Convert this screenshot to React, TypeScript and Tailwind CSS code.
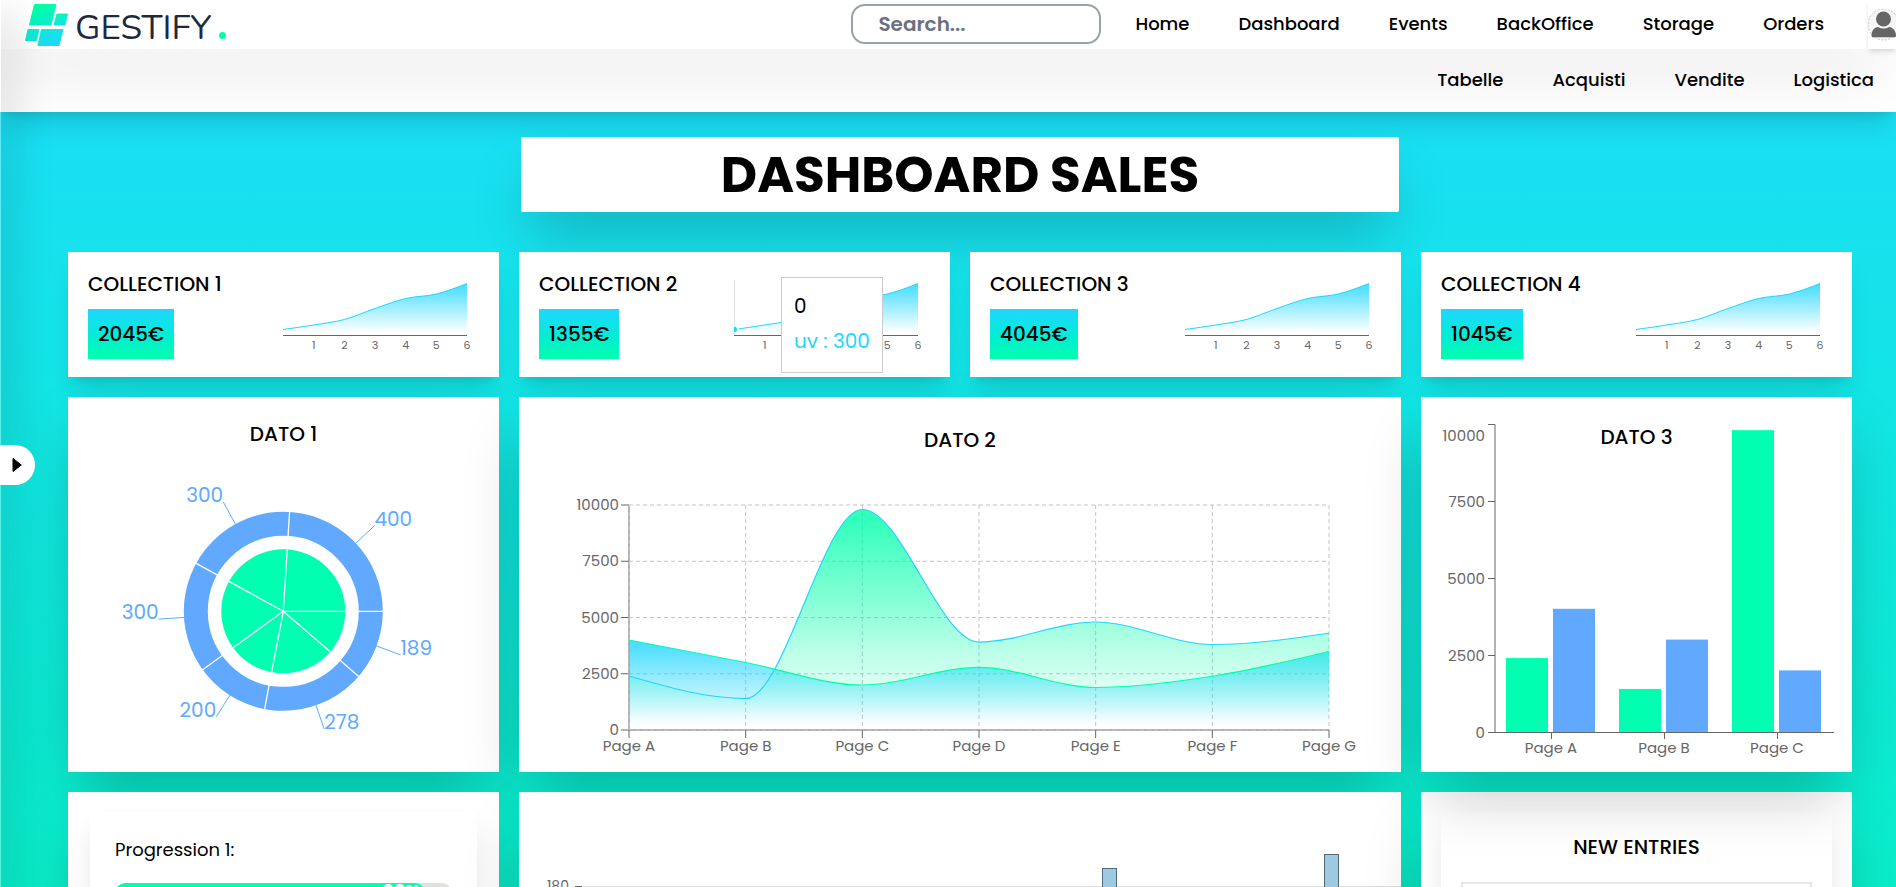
import React from "react";

type Point = [number, number];

const ACCENT_BLUE = "#1fd6ff";
const ACCENT_GREEN = "#00ffb0";
const SOFT_BLUE = "#60a9ff";
const AXIS = "#666666";

/* Monotone cubic interpolation through the points, as an SVG path. */
function monotonePath(points: Point[]): string {
  const n = points.length;
  const slopes = points.slice(1).map(([x, y], i) => (y - points[i][1]) / (x - points[i][0]));
  const tangents: number[] = new Array(n).fill(0);
  for (let i = 1; i < n - 1; i++) {
    const a = slopes[i - 1];
    const b = slopes[i];
    const p = (a + b) / 2;
    tangents[i] =
      a * b <= 0 ? 0 : Math.sign(a) * 2 * Math.min(Math.abs(a), Math.abs(b), 0.5 * Math.abs(p));
  }
  tangents[0] = (3 * slopes[0] - tangents[1]) / 2;
  tangents[n - 1] = (3 * slopes[n - 2] - tangents[n - 2]) / 2;
  let d = `M${points[0][0]},${points[0][1]}`;
  for (let i = 0; i < n - 1; i++) {
    const [x0, y0] = points[i];
    const [x1, y1] = points[i + 1];
    const h = (x1 - x0) / 3;
    d += `C${x0 + h},${y0 + h * tangents[i]},${x1 - h},${y1 - h * tangents[i + 1]},${x1},${y1}`;
  }
  return d;
}

function closeArea(path: string, points: Point[], base: number): string {
  return `${path}L${points[points.length - 1][0]},${base}L${points[0][0]},${base}Z`;
}

function FadeGradient({ id, color }: { id: string; color: string }) {
  return (
    <linearGradient id={id} x1="0" y1="0" x2="0" y2="1">
      <stop offset="5%" stopColor={color} stopOpacity={0.8} />
      <stop offset="95%" stopColor={color} stopOpacity={0} />
    </linearGradient>
  );
}

function Logo() {
  return (
    <a href="#" aria-label="Gestify" className="flex items-center gap-[7px] pl-6">
      <svg viewBox="0 0 44 42" className="h-[42px] w-11" aria-hidden="true">
        <defs>
          <linearGradient id="logo" x1="12" y1="0" x2="30" y2="42" gradientUnits="userSpaceOnUse">
            <stop offset="0.1" stopColor="#00ffa8" />
            <stop offset="1" stopColor="#1fd6ff" />
          </linearGradient>
        </defs>
        <g fill="url(#logo)" stroke="url(#logo)" strokeWidth="1" strokeLinejoin="round">
          <path d="M10.500 0.500H32L27 21H5.500Z" />
          <path d="M33 10H43.500L41 21H30Z" />
          <path d="M4 25.500H15L12.500 36.500H1.500Z" />
          <path d="M17.500 25.500H39L35 41.500H14Z" />
        </g>
      </svg>
      <span className="mt-[5px] flex items-baseline gap-2">
        <span className="font-['Nunito','Lato',sans-serif] text-[35px] leading-none text-slate-800">GESTIFY</span>
        <span className="size-[7px] rounded-full bg-[#00ffa8]" />
      </span>
    </a>
  );
}

const MAIN_LINKS = ["Home", "Dashboard", "Events", "BackOffice", "Storage", "Orders"];
const SUB_LINKS = ["Tabelle", "Acquisti", "Vendite", "Logistica"];

function Header() {
  return (
    <header className="relative z-10">
      <div className="relative flex h-[49px] items-center justify-between bg-white shadow-[0_35px_60px_-10px_rgba(0,0,0,0.11)]">
        <Logo />
        <div className="flex h-full items-center">
          <div className="flex items-center pb-0.5">
            <input
              type="search"
              aria-label="Search"
              placeholder="Search..."
              className="h-10 w-[250px] rounded-[14px] border-2 border-gray-400 bg-white px-[25px] text-[20px] font-semibold placeholder:text-gray-500"
            />
            <nav className="ml-[34px] flex gap-[49px]">
              {MAIN_LINKS.map((label) => (
                <a key={label} href="#" className="text-[18px] font-medium">
                  {label}
                </a>
              ))}
            </nav>
          </div>
          <button
            type="button"
            aria-label="Account"
            className="ml-11 flex h-full w-7 items-center overflow-hidden shadow-md"
          >
            <svg viewBox="0 0 32 32" className="size-8 shrink-0" aria-hidden="true">
              <circle cx="15.500" cy="15.500" r="15.500" fill="#f5f5f5" stroke="#c4c4c4" strokeDasharray="2 1.500" />
              <circle cx="15.500" cy="10" r="7.500" fill="#666666" />
              <path d="M3.500 26.500c0-5 3-8 6.500-8.500 3.500 2 7.500 2 11 0C24.500 18.500 28 21.500 28 26.500c0 1-.5 1.800-1.500 1.800H5C4 28.300 3.500 27.500 3.500 26.500Z" fill="#666666" />
            </svg>
          </button>
        </div>
      </div>
      <nav className="flex h-[63px] items-center justify-end gap-[49px] bg-white pr-[22px] pb-0.5 shadow-xl">
        {SUB_LINKS.map((label) => (
          <a key={label} href="#" className="relative text-[18px] font-medium">
            {label}
          </a>
        ))}
      </nav>
    </header>
  );
}

const SPARK_POINTS: Point[] = [
  [10, 57.5],
  [40.67, 53],
  [71.33, 47.5],
  [102, 36.5],
  [132.67, 26.5],
  [163.33, 22],
  [194, 11.5],
];

function Sparkline({ id, active }: { id: string; active?: boolean }) {
  const line = monotonePath(SPARK_POINTS);
  return (
    <svg viewBox="0 0 206 85" className="h-[85px] w-[206px] shrink-0" role="img" aria-label="Trend">
      <defs>
        <FadeGradient id={id} color={ACCENT_BLUE} />
        <clipPath id={`${id}-clip`}>
          <rect x="10" y="5" width="190" height="60" />
        </clipPath>
      </defs>
      <path d={closeArea(line, SPARK_POINTS, 63)} fill={`url(#${id})`} />
      <path d={line} fill="none" stroke={ACCENT_BLUE} />
      <path d="M10 63.500H194" stroke={AXIS} />
      {active && (
        <g clipPath={`url(#${id}-clip)`}>
          <path d="M10.500 9V63" stroke="#dddddd" />
          <circle cx="10" cy="57.500" r="4" fill={ACCENT_BLUE} stroke="#ffffff" strokeWidth="2" />
        </g>
      )}
      {SPARK_POINTS.slice(1).map(([x], i) => (
        <text key={x} x={x} y="77" textAnchor="middle" fontSize="11" fill={AXIS}>
          {i + 1}
        </text>
      ))}
    </svg>
  );
}

const COLLECTIONS = [
  { name: "COLLECTION 1", amount: "2045€" },
  { name: "COLLECTION 2", amount: "1355€" },
  { name: "COLLECTION 3", amount: "4045€" },
  { name: "COLLECTION 4", amount: "1045€" },
];

function CollectionCard({ name, amount, index }: { name: string; amount: string; index: number }) {
  const active = index === 1;
  return (
    <section className="flex h-[125px] justify-between bg-white px-5 pt-5 shadow-xl">
      <div className="flex flex-col items-start gap-[13px]">
        <h2 className="text-[20px] leading-6 font-medium">{name}</h2>
        <p className="bg-linear-to-b from-[#1fd6ff] to-[#00ffab] p-2.5 text-[20px] leading-[30px] font-medium">
          {amount}
        </p>
      </div>
      <div className="relative">
        <Sparkline id={`spark-${index}`} active={active} />
        {active && (
          <div className="absolute top-[5px] left-[57px] flex flex-col gap-1 border border-[#cccccc] bg-white px-3 pt-[13px] pb-[15px] text-[20px] leading-[31px] whitespace-nowrap">
            <p>0</p>
            <p className="text-[#1fd6ff]">uv : 300</p>
          </div>
        )}
      </div>
    </section>
  );
}

const SLICES = [400, 300, 300, 200, 278, 189];

function PieChart() {
  const cx = 215.3;
  const cy = 165.3;
  const total = SLICES.reduce((a, b) => a + b, 0);
  const at = (angle: number, r: number): Point => [cx + r * Math.cos(angle), cy - r * Math.sin(angle)];
  let start = 0;
  const parts = SLICES.map((value) => {
    const sweep = (value / total) * Math.PI * 2;
    const part = { value, start, mid: start + sweep / 2 };
    start += sweep;
    return part;
  });
  return (
    <svg viewBox="0 0 431 326" className="w-full" role="img" aria-label="Dato 1">
      <circle cx={cx} cy={cy} r="62" fill={ACCENT_GREEN} />
      <circle cx={cx} cy={cy} r="87.500" fill="none" stroke={SOFT_BLUE} strokeWidth="24" />
      {parts.map(({ value, start: a, mid }, i) => {
        const [x1, y1] = at(a, 62);
        const [x2, y2] = at(a, 75);
        const [x3, y3] = at(a, 100);
        const [lx, ly] = at(mid, 99);
        const [tx, ty] = at(mid, 125);
        return (
          <g key={i}>
            <path
              d={`M${cx},${cy}L${x1},${y1}M${x2},${y2}L${x3},${y3}`}
              stroke="#ffffff"
              strokeWidth="1.300"
            />
            <path d={`M${lx},${ly}L${tx},${ty}`} stroke={SOFT_BLUE} />
            <text x={tx} y={ty} textAnchor={tx > cx ? "start" : "end"} fontSize="20" fill={SOFT_BLUE}>
              {value}
            </text>
          </g>
        );
      })}
    </svg>
  );
}

const UV = [4000, 3000, 2000, 2780, 1890, 2390, 3490];
const PV = [2400, 1398, 9800, 3908, 4800, 3800, 4300];
const PAGES = ["Page A", "Page B", "Page C", "Page D", "Page E", "Page F", "Page G"];
const TICKS = [0, 2500, 5000, 7500, 10000];

function AreaChart() {
  const x = (i: number) => 110 + (i * 700) / 6;
  const y = (v: number) => 278 - v * 0.0225;
  const uv = UV.map((v, i): Point => [x(i), y(v)]);
  const pv = PV.map((v, i): Point => [x(i), y(v)]);
  const uvLine = monotonePath(uv);
  const pvLine = monotonePath(pv);
  return (
    <svg viewBox="0 0 882 320" className="w-full" role="img" aria-label="Dato 2">
      <defs>
        <FadeGradient id="area-uv" color={ACCENT_BLUE} />
        <FadeGradient id="area-pv" color="#00ffab" />
      </defs>
      <path d="M110 53V278M110 278H810" stroke={AXIS} />
      {TICKS.map((t) => (
        <g key={t}>
          <path d={`M102,${y(t)}H110`} stroke={AXIS} />
          <path d={`M110,${y(t)}H810`} stroke="#c4c4c4" strokeDasharray="4 3" />
          <text x="100" y={y(t) + 5} textAnchor="end" fontSize="15" fill={AXIS}>
            {t}
          </text>
        </g>
      ))}
      {PAGES.map((page, i) => (
        <g key={page}>
          <path d={`M${x(i)},278V286`} stroke={AXIS} />
          <path d={`M${x(i)},53V278`} stroke="#c4c4c4" strokeDasharray="4 3" />
          <text x={x(i)} y="299" textAnchor="middle" fontSize="15" fill={AXIS}>
            {page}
          </text>
        </g>
      ))}
      <path d={closeArea(uvLine, uv, 278)} fill="url(#area-uv)" />
      <path d={uvLine} fill="none" stroke="#00ffab" strokeWidth="1.200" />
      <path d={closeArea(pvLine, pv, 278)} fill="url(#area-pv)" />
      <path d={pvLine} fill="none" stroke={ACCENT_BLUE} strokeWidth="1.200" />
    </svg>
  );
}

function BarChart() {
  const base = 335;
  const k = 0.0308;
  return (
    <svg viewBox="0 0 431 375" className="w-full [grid-area:1/1]" role="img" aria-label="Dato 3">
      {PAGES.slice(0, 3).map((page, i) => {
        const left = 85 + i * 113;
        return (
          <g key={page}>
            <rect x={left} y={base - PV[i] * k} width="42" height={PV[i] * k} fill={ACCENT_GREEN} />
            <rect x={left + 47} y={base - UV[i] * k} width="42" height={UV[i] * k} fill={SOFT_BLUE} />
            <path d={`M${left + 45.5} 335V342`} stroke={AXIS} />
            <text x={left + 45} y="356" textAnchor="middle" fontSize="15" fill={AXIS}>
              {page}
            </text>
          </g>
        );
      })}
      <path d="M74 27.500V335.500M74 335.500H413" fill="none" stroke={AXIS} />
      {TICKS.map((t) => {
        const y = Math.round(base - t * k) + 0.5;
        return (
          <g key={t}>
            <path d={`M67,${y}H74`} stroke={AXIS} />
            <text x="64" y={t === 10000 ? 44 : y + 5} textAnchor="end" fontSize="15" fill={AXIS}>
              {t}
            </text>
          </g>
        );
      })}
    </svg>
  );
}

function ProgressCard() {
  return (
    <section className="h-[375px] bg-white px-[22px] pt-5 shadow-[0_30px_60px_-12px_rgba(0,0,0,0.25)]">
      <div className="h-[335px] bg-white px-[25px] pt-[26px] shadow-[0_15px_30px_-5px_rgba(0,0,0,0.12)]">
        <p className="text-[18px] leading-6" id="progression-1">
          Progression 1:
        </p>
        <div
          role="progressbar"
          aria-labelledby="progression-1"
          aria-valuenow={92}
          className="mt-[21px] h-5 overflow-hidden rounded-full bg-[#e0e0de]"
        >
          <div className="flex h-full w-[92%] items-start justify-end rounded-full bg-[#00ffb0] pr-1 text-[18px] leading-4 font-bold text-white">
            90%
          </div>
        </div>
      </div>
    </section>
  );
}

function HistogramCard() {
  return (
    <section className="col-span-2 h-[375px] bg-white shadow-[0_30px_60px_-12px_rgba(0,0,0,0.25)]">
      <svg viewBox="0 0 882 375" className="w-full" role="img" aria-label="Histogram">
        <text x="50" y="99" textAnchor="end" fontSize="14" fill={AXIS}>
          180
        </text>
        <path d="M56 94.500H882" stroke="#dddddd" />
        <path d="M56 94.500H63" stroke={AXIS} />
        <rect x="583.500" y="76.500" width="14" height="250" fill="#9ecae1" stroke="#4f6b7a" />
        <rect x="805.500" y="62.500" width="14" height="264" fill="#9ecae1" stroke="#4f6b7a" />
      </svg>
    </section>
  );
}

function EntriesCard() {
  return (
    <section className="h-[375px] bg-white px-5 pt-5 shadow-[0_30px_60px_-12px_rgba(0,0,0,0.25)]">
      <div className="h-[335px] px-5 pt-[23px] shadow-[0_15px_30px_-5px_rgba(0,0,0,0.12)]">
        <h2 className="text-center text-[20px] leading-6 font-medium">NEW ENTRIES</h2>
        <div className="mt-[23px] h-60 border-2 border-gray-200 bg-white" />
      </div>
    </section>
  );
}

export default function App() {
  return (
    <div className="relative flex h-screen flex-col overflow-hidden bg-white font-['Poppins','Inter',sans-serif] text-black">
      <Header />
      <main className="grid min-h-0 flex-1 grid-cols-4 content-start gap-5 bg-linear-to-b from-[#1adff4] to-[#0aeeca] pt-[25px] pr-11 pl-[68px]">
        <h1 className="col-span-2 col-start-2 mx-0.5 mb-5 rounded-xs bg-white text-center text-[50px] leading-[75px] font-bold shadow-[0_30px_60px_-12px_rgba(0,0,0,0.25)]">
          DASHBOARD SALES
        </h1>
        <div className="col-span-4 grid grid-cols-4 gap-5">
          {COLLECTIONS.map((item, i) => (
            <CollectionCard key={item.name} {...item} index={i} />
          ))}
        </div>
        <section className="h-[375px] bg-white pt-[25px] shadow-[0_30px_60px_-12px_rgba(0,0,0,0.25)]">
          <h2 className="text-center text-[20px] leading-6 font-medium">DATO 1</h2>
          <PieChart />
        </section>
        <section className="col-span-2 h-[375px] bg-white pt-[31px] shadow-[0_30px_60px_-12px_rgba(0,0,0,0.25)]">
          <h2 className="text-center text-[20px] leading-6 font-medium">DATO 2</h2>
          <AreaChart />
        </section>
        <section className="relative grid h-[375px] bg-white shadow-[0_30px_60px_-12px_rgba(0,0,0,0.25)]">
          <BarChart />
          <h2 className="pt-7 text-center text-[20px] leading-6 font-medium [grid-area:1/1]">DATO 3</h2>
        </section>
        <ProgressCard />
        <HistogramCard />
        <EntriesCard />
      </main>
      <aside className="absolute inset-y-0 left-0 z-20 flex w-px items-center bg-white/30 shadow-[0_25px_40px_12px_rgba(0,0,0,0.16)]">
        <button
          type="button"
          aria-label="Open sidebar"
          className="mt-[43px] flex h-10 w-[35px] shrink-0 items-center rounded-r-full bg-white pl-3"
        >
          <svg viewBox="0 0 10 16" className="h-4 w-2.5" aria-hidden="true">
            <path d="M1 1.500V14.500L9.300 8Z" stroke="#000000" strokeLinejoin="round" />
          </svg>
        </button>
      </aside>
    </div>
  );
}
